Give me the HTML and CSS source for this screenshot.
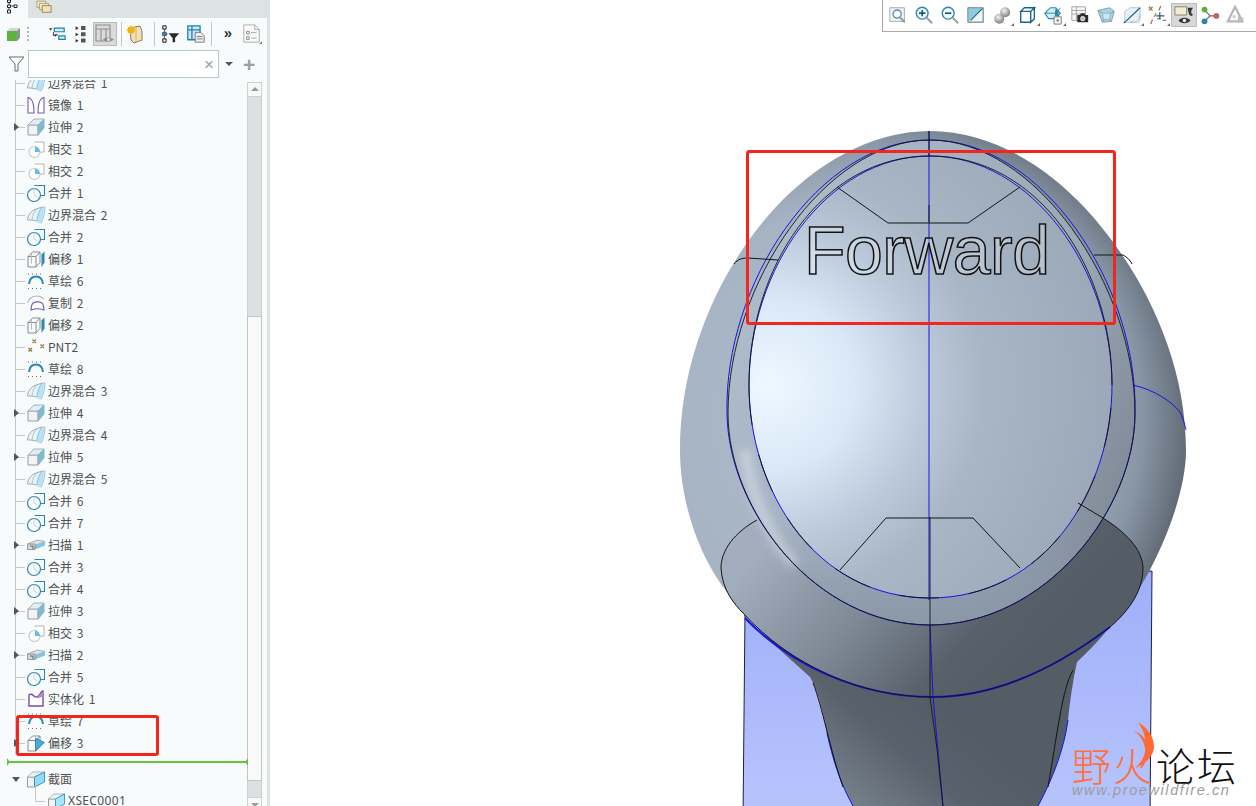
FILE: index.html
```html
<!DOCTYPE html>
<html lang="zh">
<head>
<meta charset="utf-8">
<title>Model tree</title>
<link rel="stylesheet" href="styles.css">
</head>
<body>
<svg class="defs" width="0" height="0" aria-hidden="true">
  <defs>
    <symbol id="i-extrude" viewBox="0 0 20 20"><path d="M2 8h10v10H2z" fill="#f3f3f3" stroke="#9a9a9a"/><path d="M2 8l6-6h10l-6 6z" fill="#dfeef3" stroke="#9fb4bc"/><path d="M12 8l6-6v9l-6 7z" fill="#7fb9d2" stroke="#8fb4c4"/></symbol>
    <symbol id="i-intersect" viewBox="0 0 20 20"><circle cx="8.500" cy="13" r="5.500" fill="#fff" stroke="#c9c9c9" stroke-width="1.200"/><path d="M8.500 3H18v10H14" fill="#fff" stroke="#b4b4b4"/><path d="M9 7.500a5.500 5.500 0 0 1 5 5.500H9z" fill="#58c0ea"/></symbol>
    <symbol id="i-merge" viewBox="0 0 20 20"><path d="M8.500 2.500H18.500V12.500H14" fill="none" stroke="#2e86ad" stroke-width="1.100"/><circle cx="8" cy="12" r="6.500" fill="#fbfdfd" stroke="#2e86ad" stroke-width="1.200"/><path d="M8 5.500V12l5 3" fill="none" stroke="#bcd6e2"/></symbol>
    <symbol id="i-boundary" viewBox="0 0 20 20"><path d="M1.500 15C2 10 5 6 8 5c3-1.500 7-3 11-3-.5 5-1.500 12-4 16-3-2-9-3.500-13.500-3z" fill="#e9f4f9" stroke="#a2a9ac"/><path d="M10 17c0-5 2-9 4.500-13.500L19 2c-.5 5-1.500 12-4 16z" fill="#b8e4f7"/><path d="M6 15C6.500 10 8 7 11 4M11 16C11.500 11 13 7 15 3" fill="none" stroke="#94b8c8" stroke-width=".8"/></symbol>
    <symbol id="i-mirror" viewBox="0 0 20 20"><path d="M2 18V2.500C6 3 8 8 8 18zM18 18V2.500C14 3 12 8 12 18z" fill="#fff" stroke="#7a58a8" stroke-width="1.100"/></symbol>
    <symbol id="i-offset" viewBox="0 0 20 20"><path d="M2 7.500h8V18H2zM2 7.500L6.500 3h7.500L10 7.500M10 18l4-4.500V3" fill="none" stroke="#8a8a8a"/><path d="M5.500 3.500v11" stroke="#b8b8b8"/><path d="M15.500 5.500l3-3v11l-3 4.500z" fill="#2f88b0"/></symbol>
    <symbol id="i-offset3" viewBox="0 0 20 20"><path d="M2 7.500h8V18H2zM2 7.500L6.500 3h7.500L10 7.500M10 18l4-4.500V3" fill="none" stroke="#8a8a8a"/><path d="M9.500 5l9 4.500-9 8z" fill="#46aede" stroke="#1f6d92" stroke-width=".7"/></symbol>
    <symbol id="i-sketch" viewBox="0 0 20 20"><path d="M3 13C3.500 8 6.500 5.500 10 5.500s6.500 2.500 7 7.500" fill="none" stroke="#2b8ab5" stroke-width="2"/><path d="M2 17.500h16M2 3h16" stroke="#6d6d6d" stroke-width="1" stroke-dasharray="1 3"/></symbol>
    <symbol id="i-copy" viewBox="0 0 20 20"><path d="M2 10c0-4 4-7 9-7 3 0 5 1 7 3" fill="none" stroke="#b4b4b4" stroke-width="1.100"/><path d="M5 17c.2-3 1-6 2-7 3-1.500 6-1.500 9 0 1 1 1.800 4 2 7-4-1.500-9-1.500-13 0z" fill="#fff" stroke="#7e57a8" stroke-width="1.100"/></symbol>
    <symbol id="i-pnt" viewBox="0 0 20 20"><path d="M6.500 2.500l3.500 3.500M10 2.500L6.500 6M14.500 7.500l3.500 3.500M18 7.500L14.500 11M2.500 11l3.500 3.500M6 11l-3.500 3.500" fill="none" stroke="#9a7d3c" stroke-width="1.300"/></symbol>
    <symbol id="i-solid" viewBox="0 0 20 20"><path d="M3 6c3-3 5 3 8 2s3-5 6-6v15H3z" fill="#fff" stroke="#7b4ea2" stroke-width="1.400"/><path d="M10 8.500c2 0 4-3 7-6v5c-3 1-5 2-7 1z" fill="#a98cc4"/></symbol>
    <symbol id="i-sweep" viewBox="0 0 20 20"><path d="M1.500 9l10-4 7.500 1.500-10 4z" fill="#dfe3e5" stroke="#98a0a4" stroke-width=".8"/><path d="M9 10.500l10-4v4l-10 4z" fill="#84c6de"/><path d="M1.500 9H9v5.500H1.500z" fill="#d7dadb" stroke="#7d8488" stroke-width=".8"/><path d="M4 11h3v3" fill="none" stroke="#5c6468" stroke-width="1"/></symbol>
    <symbol id="i-section" viewBox="0 0 20 20"><path d="M1.500 8h7v10h-7z" fill="#f3f3f3" stroke="#9a9a9a"/><path d="M1.500 8l5-5h12l-10 5z" fill="#eef5f7" stroke="#a8b4b8"/><path d="M8.500 8l10-5v10l-10 5z" fill="#8fdcf7" stroke="#3f97ba"/></symbol>
    <symbol id="i-xsec" viewBox="0 0 20 20"><path d="M1.500 8h7v10h-7z" fill="#f3f3f3" stroke="#9a9a9a"/><path d="M1.500 8l5-5h11l-9 5z" fill="#eef5f7" stroke="#a8b4b8"/><path d="M8.500 8l9-5v10l-9 5z" fill="#a6e6fb" stroke="#4a9cbb"/></symbol>
  </defs>
</svg>

<div class="app">
  <aside class="side">
    <div class="tabs">
      <div class="tab tab-on">
        <svg width="14" height="14" viewBox="0 0 14 14"><path d="M3 3v8M3 6h5" fill="none" stroke="#555"/><path d="M1.500 0h3v2.500h-3zM1.500 5h3v2.500h-3zM1.500 10h3v3h-3zM8 5h3v2.500H8z" fill="#fff" stroke="#222"/></svg>
      </div>
      <div class="tab">
        <svg width="16" height="13" viewBox="0 0 18 14"><path d="M1 1h10v7H1z" fill="#f5eccd" stroke="#a79a6a"/><path d="M4 3.500h10v7H4z" fill="#f5eccd" stroke="#a79a6a"/><path d="M7 6h10v7.500H7z" fill="#f3e3b2" stroke="#8d7f52"/></svg>
      </div>
    </div>

    <div class="tools">
      <span class="tool">
        <svg width="16" height="16" viewBox="0 0 16 16"><path d="M1 5h10v10H1z" fill="#5eb33e"/><path d="M1 5l3-3h10l-3 3z" fill="#d2d5d3"/><path d="M11 5l3-3v10l-3 3z" fill="#8c9290"/></svg>
      </span>
      <span class="grip"></span>
      <span class="tool tool-tree">
        <svg width="18" height="18" viewBox="0 0 20 20"><path d="M7 3.500h11v4H7zM12 12h7v4h-7z" fill="#d7eefa" stroke="#1f7fb0" stroke-width="1.300"/><path d="M6 8v4M8 11h3" stroke="#333" stroke-width="1.100"/><path d="M1 3.500h4L3 6zM6 10.500h4L8 13z" fill="#333"/></svg>
      </span>
      <span class="tool">
        <svg width="18" height="18" viewBox="0 0 20 20"><path d="M10 1h5v4.500h-5zM10 8h5v4.500h-5zM10 15h5v4.500h-5z" fill="#555"/><path d="M4 1.500L7.500 3.500 4 5.500zM4 8.500l3.500 2-3.500 2zM4 15.500l3.500 2-3.500 2z" fill="#333"/></svg>
      </span>
      <span class="tool tool-on">
        <svg width="20" height="20" viewBox="0 0 20 20"><path d="M1 1h14v16H1zM1 5h14M6 5v12M11 5v12" fill="none" stroke="#8d8d8d" stroke-width="1.100"/><path d="M8 15.500c2-2.500 8-2.500 11 0-3 2.500-9 2.500-11 0z" fill="#8d8d8d"/><circle cx="13.500" cy="15.500" r="1.500" fill="#e5e5e5"/></svg>
      </span>
      <span class="sep sep-a"></span>
      <span class="tool tool-b">
        <svg width="20" height="20" viewBox="0 0 20 20"><path d="M5 4l10-2 2 5v9l-8 3-3-3z" fill="#f1dfb6" stroke="#8b7d5a"/><path d="M11 3v15" stroke="#c8b680"/><circle cx="6" cy="6" r="3.500" fill="#f6a018"/><path d="M6 1v10M1 6h10M2.500 2.500l7 7M9.500 2.500l-7 7" stroke="#f2c200" stroke-width=".8"/></svg>
      </span>
      <span class="sep sep-c"></span>
      <span class="tool tool-d">
        <svg width="18" height="18" viewBox="0 0 22 22"><path d="M3 2v18M3 11h4" stroke="#555" fill="none"/><path d="M1 1h4v4H1zM1 9h4v4H1zM1 17h4v4H1z" fill="#fff" stroke="#111" stroke-width="1.200"/><path d="M1 9h4v4H1z" fill="#2f8ec0"/><path d="M8 10h13l-5 6v5h-3v-5z" fill="#2a2a2a"/></svg>
      </span>
      <span class="tool tool-e">
        <svg width="18" height="18" viewBox="0 0 22 22"><path d="M1 1h15v17H1zM1 6h15M6 1v17" fill="#cfeaf6" stroke="#1f7fb0" stroke-width="1.600"/><path d="M10 9h7l4 4v8H10z" fill="#eef0f0" stroke="#666"/><path d="M12 14h7M12 17h7" stroke="#666"/></svg>
      </span>
      <span class="sep sep-f"></span>
      <span class="tool tool-g more">»</span>
      <span class="tool tool-h">
        <svg width="20" height="20" viewBox="0 0 22 22"><path d="M2 1h12l5 5v14H2z" fill="#fafafa" stroke="#a8a8a8"/><path d="M14 1v5h5" fill="none" stroke="#a8a8a8"/><path d="M5 8h3v3H5zM5 14h3v3H5z" fill="none" stroke="#8a8a8a"/><path d="M10 9.500h6M10 15.500h6" stroke="#a0a0a0"/><path d="M22 19v3h-3z" fill="#777"/></svg>
      </span>
    </div>

    <div class="filter">
      <svg class="funnel" width="17" height="16" viewBox="0 0 17 16"><path d="M1 1h15l-6 7v7H7V8z" fill="#fafafa" stroke="#6a6a6a"/></svg>
      <div class="search"><span class="clear">×</span></div>
      <span class="drop"></span>
      <span class="plus">+</span>
    </div>

    <div class="tree">
      <div class="tree-body">
        <ul class="rows">
          <li class="row"><svg class="ic"><use href="#i-boundary"/></svg><span>边界混合 1</span></li>
          <li class="row"><svg class="ic"><use href="#i-mirror"/></svg><span>镜像 1</span></li>
          <li class="row exp"><svg class="ic"><use href="#i-extrude"/></svg><span>拉伸 2</span></li>
          <li class="row"><svg class="ic"><use href="#i-intersect"/></svg><span>相交 1</span></li>
          <li class="row"><svg class="ic"><use href="#i-intersect"/></svg><span>相交 2</span></li>
          <li class="row"><svg class="ic"><use href="#i-merge"/></svg><span>合并 1</span></li>
          <li class="row"><svg class="ic"><use href="#i-boundary"/></svg><span>边界混合 2</span></li>
          <li class="row"><svg class="ic"><use href="#i-merge"/></svg><span>合并 2</span></li>
          <li class="row"><svg class="ic"><use href="#i-offset"/></svg><span>偏移 1</span></li>
          <li class="row"><svg class="ic"><use href="#i-sketch"/></svg><span>草绘 6</span></li>
          <li class="row"><svg class="ic"><use href="#i-copy"/></svg><span>复制 2</span></li>
          <li class="row"><svg class="ic"><use href="#i-offset"/></svg><span>偏移 2</span></li>
          <li class="row"><svg class="ic"><use href="#i-pnt"/></svg><span>PNT2</span></li>
          <li class="row"><svg class="ic"><use href="#i-sketch"/></svg><span>草绘 8</span></li>
          <li class="row"><svg class="ic"><use href="#i-boundary"/></svg><span>边界混合 3</span></li>
          <li class="row exp"><svg class="ic"><use href="#i-extrude"/></svg><span>拉伸 4</span></li>
          <li class="row"><svg class="ic"><use href="#i-boundary"/></svg><span>边界混合 4</span></li>
          <li class="row exp"><svg class="ic"><use href="#i-extrude"/></svg><span>拉伸 5</span></li>
          <li class="row"><svg class="ic"><use href="#i-boundary"/></svg><span>边界混合 5</span></li>
          <li class="row"><svg class="ic"><use href="#i-merge"/></svg><span>合并 6</span></li>
          <li class="row"><svg class="ic"><use href="#i-merge"/></svg><span>合并 7</span></li>
          <li class="row exp"><svg class="ic"><use href="#i-sweep"/></svg><span>扫描 1</span></li>
          <li class="row"><svg class="ic"><use href="#i-merge"/></svg><span>合并 3</span></li>
          <li class="row"><svg class="ic"><use href="#i-merge"/></svg><span>合并 4</span></li>
          <li class="row exp"><svg class="ic"><use href="#i-extrude"/></svg><span>拉伸 3</span></li>
          <li class="row"><svg class="ic"><use href="#i-intersect"/></svg><span>相交 3</span></li>
          <li class="row exp"><svg class="ic"><use href="#i-sweep"/></svg><span>扫描 2</span></li>
          <li class="row"><svg class="ic"><use href="#i-merge"/></svg><span>合并 5</span></li>
          <li class="row"><svg class="ic"><use href="#i-solid"/></svg><span>实体化 1</span></li>
          <li class="row"><svg class="ic"><use href="#i-sketch"/></svg><span>草绘 7</span></li>
          <li class="row exp"><svg class="ic"><use href="#i-offset3"/></svg><span>偏移 3</span></li>
        </ul>
        <div class="insert"></div>
        <div class="section-head"><span class="down"></span><svg class="ic"><use href="#i-section"/></svg><span>截面</span></div>
        <div class="section-item"><svg class="ic"><use href="#i-xsec"/></svg><span>XSEC0001</span></div>
      </div>
      <div class="scroll">
        <div class="scroll-btn"></div>
        <div class="scroll-track"></div>
        <div class="scroll-thumb"></div>
        <div class="scroll-track scroll-end"></div>
        <div class="scroll-btn scroll-btn-down"></div>
      </div>
    </div>
    <div class="mark"></div>
  </aside>
  <div class="strip"></div>

  <main class="canvas">
    <svg class="model" width="986" height="806" viewBox="270 0 986 806">
      <defs>
        <linearGradient id="g-sheet" gradientUnits="userSpaceOnUse" x1="0" y1="570" x2="0" y2="806"><stop offset="0" stop-color="#a0aefa"/><stop offset="1" stop-color="#b6c4fd"/></linearGradient>
        <linearGradient id="g-neck" gradientUnits="userSpaceOnUse" x1="840" y1="806" x2="930" y2="700"><stop offset="0" stop-color="#79848f"/><stop offset=".6" stop-color="#59616b"/><stop offset="1" stop-color="#545c66"/></linearGradient>
        <radialGradient id="g-egg" gradientUnits="userSpaceOnUse" cx="860" cy="420" r="345"><stop offset="0" stop-color="#b0bccb"/><stop offset=".62" stop-color="#a6b3c3"/><stop offset=".82" stop-color="#8795a5"/><stop offset=".96" stop-color="#5f6872"/><stop offset="1" stop-color="#565e68"/></radialGradient>
        <linearGradient id="g-ring" gradientUnits="userSpaceOnUse" x1="730" y1="330" x2="1135" y2="480"><stop offset="0" stop-color="#aebbca"/><stop offset=".7" stop-color="#9aa7b7"/><stop offset="1" stop-color="#7f8a97"/></linearGradient>
        <radialGradient id="g-inner" gradientUnits="userSpaceOnUse" cx="770" cy="385" r="345"><stop offset="0" stop-color="#ecf9ff"/><stop offset=".25" stop-color="#dae7f7"/><stop offset=".45" stop-color="#bcc9da"/><stop offset=".62" stop-color="#a9b6c6"/><stop offset="1" stop-color="#9ba8b7"/></radialGradient>
        <linearGradient id="g-collar" gradientUnits="userSpaceOnUse" x1="790" y1="520" x2="985" y2="700"><stop offset="0" stop-color="#a2aebd"/><stop offset=".45" stop-color="#7d8895"/><stop offset=".8" stop-color="#58606a"/><stop offset="1" stop-color="#545c66"/></linearGradient>
        <linearGradient id="g-band" gradientUnits="userSpaceOnUse" x1="0" y1="520" x2="0" y2="630"><stop offset="0" stop-color="#8c99a9" stop-opacity="0"/><stop offset="1" stop-color="#8896a6"/></linearGradient>
        <filter id="f-soft" x="-30%" y="-30%" width="160%" height="160%"><feGaussianBlur stdDeviation="5"/></filter>
      </defs>

      <path d="M745 612L743 820H1150L1152 571z" fill="url(#g-sheet)" stroke="#1c2240" stroke-width="1"/>
      <path d="M745 614L780 650L810 677C820 695 823 715 827 733C834 765 842 786 853 806H1038C1052 780 1064 750 1068 720C1070 700 1073 680 1077 662C1095 645 1120 620 1140 580L930 560z" fill="url(#g-neck)"/>
      <path d="M930 131C870 131 815 165 775 208C725 262 680 350 680 450C680 510 705 575 745 612C790 665 860 697 932 697C1000 697 1060 665 1110 627C1140 600 1186 510 1186 450C1186 350 1135 262 1085 208C1045 165 990 131 930 131z" fill="url(#g-egg)"/>
      <path d="M757 520C735 532 721 550 721 568C722 590 735 605 743 613C790 665 860 697 932 697C1000 697 1060 665 1110 627C1130 610 1143 590 1143 568C1142 548 1125 532 1103 518L1078 503L930 560z" fill="url(#g-collar)"/>
      <path d="M930 140C825 140 728 285 728 413C728 510 815 625 930 625C1045 625 1135 510 1135 413C1135 285 1035 140 930 140z" fill="url(#g-ring)"/>
      <path d="M930 140C825 140 728 285 728 413C728 510 815 625 930 625C1045 625 1135 510 1135 413C1135 285 1035 140 930 140z" fill="url(#g-band)"/>
      <path d="M745 450C750 495 768 535 795 565" fill="none" stroke="#eef4fa" stroke-width="10" stroke-opacity=".45" filter="url(#f-soft)"/>
      <path d="M930 156C822 156 749 270 749 385C749 490 815 598 930 598C1045 598 1112 490 1112 385C1112 270 1036 156 930 156z" fill="url(#g-inner)"/>

      <g fill="none" stroke="#1414e6" stroke-width="1">
        <path d="M930 140C818 140 724 285 727 413C728 510 815 625 930 625C1045 625 1135 510 1135 413C1138 285 1042 140 930 140z"/>
        <path d="M930 156C826 156 749 270 749 385C749 490 815 598 930 598C1045 598 1112 490 1112 385C1112 270 1032 156 930 156z"/>
        <path d="M929 131L929 600"/>
        <path d="M930 625L933 697Q938 750 943 806"/>
        <path d="M1133 385C1155 390 1172 402 1180 412C1184 420 1186 430 1186 430"/>
        <path d="M745 618C790 665 860 697 932 697C1000 697 1060 665 1110 627" stroke-width="2"/>
        <path d="M827 733C834 765 842 786 853 806M1068 720C1064 750 1052 780 1038 806"/>
      </g>

      <g fill="none" stroke="#141414" stroke-width=".9">
        <path d="M930 140C825 140 728 285 728 413C728 510 815 625 930 625C1045 625 1135 510 1135 413C1135 285 1035 140 930 140z"/>
        <path d="M930 156C820 156 749 270 749 385M1112 385C1112 270 1040 156 930 156"/>
        <path d="M749 385C749 490 815 598 930 598C1045 598 1112 490 1112 385" stroke-dasharray="40 30"/>
        <path d="M837 187L888 223H968L1020 187" stroke-width="1"/>
        <path d="M840 570L886 518H973L1020 568" stroke-width="1"/>
        <path d="M929 131V156M929 205V222M930 517V697Q938 750 943 806"/>
        <path d="M734 264C738 259 742 258 748 258L778 260M1094 255L1123 255C1127 257 1130 260 1132 264" stroke-width="1"/>
        <path d="M757 520C735 532 721 550 721 568C722 590 735 605 743 613C790 665 860 697 932 697C1000 697 1060 665 1110 627C1130 610 1143 590 1143 568C1142 548 1125 532 1103 518L1078 503" stroke-width="1"/>
        <path d="M813 683C822 705 830 750 843 787M1073 670C1062 690 1058 730 1048 787" stroke-width="1"/>
      </g>

      <g class="word">
        <text class="word-face" x="804" y="274" textLength="246">Forward</text>
      </g>

      <rect x="747.500" y="151.500" width="367" height="172" rx="2" fill="none" stroke="#f5241c" stroke-width="3"/>
    </svg>

    <div class="viewbar">
      <span class="vb"><svg width="20" height="20" viewBox="0 0 22 22"><path d="M2 3h16v15H2z" fill="#f3f5f6" stroke="#a2a2a2"/><circle cx="10" cy="10" r="4.500" fill="#fff" stroke="#4a8aa8" stroke-width="1.400"/><path d="M13.500 14l5 5" stroke="#999" stroke-width="2.200"/></svg></span>
      <span class="vb"><svg width="20" height="20" viewBox="0 0 22 22"><circle cx="9" cy="9" r="6.500" fill="#f3fafd" stroke="#2e86ad" stroke-width="1.500"/><path d="M5.500 9h7M9 5.500v7" stroke="#14597b" stroke-width="1.800"/><path d="M14 14l6 6" stroke="#a3a3a3" stroke-width="2.400"/></svg></span>
      <span class="vb"><svg width="20" height="20" viewBox="0 0 22 22"><circle cx="9" cy="9" r="6.500" fill="#f3fafd" stroke="#2e86ad" stroke-width="1.500"/><path d="M5.500 9h7" stroke="#14597b" stroke-width="1.800"/><path d="M14 14l6 6" stroke="#a3a3a3" stroke-width="2.400"/></svg></span>
      <span class="vb"><svg width="20" height="20" viewBox="0 0 22 22"><path d="M2 3h17v16H2z" fill="#8fcbe4" stroke="#777"/><path d="M3 18C8 16 13 8 18 4v14z" fill="#f3f6f7"/><path d="M5 17L18 4" stroke="#1f5f80" stroke-width="1.200"/></svg></span>
      <span class="vb vb-c"><svg width="20" height="20" viewBox="0 0 22 22"><defs><radialGradient id="g-ball" cx=".4" cy=".35" r=".7"><stop offset="0" stop-color="#f4f4f4"/><stop offset="1" stop-color="#777"/></radialGradient></defs><circle cx="8" cy="15" r="5.500" fill="url(#g-ball)"/><circle cx="14.500" cy="8" r="5.500" fill="url(#g-ball)"/></svg></span>
      <span class="vb vb-c"><svg width="20" height="20" viewBox="0 0 22 22"><path d="M3 7h11v12H3zM3 7l4-4h11l-4 4zM14 7l4-4v12l-4 4z" fill="#fff" stroke="#17648a" stroke-width="1.500"/></svg></span>
      <span class="vb vb-c"><svg width="20" height="20" viewBox="0 0 22 22"><path d="M1 9l6-6h6l5 6-5 6H5z" fill="#d0edf9" stroke="#2e86ad" stroke-width="1.200"/><path d="M1 9h12l5-6" fill="none" stroke="#2e86ad"/><path d="M13 3l3 5v4h-4V8z" fill="#2e86ad"/><path d="M11 13h8v8h-8z" fill="#f4f4f4" stroke="#777"/><path d="M14 16h2v2h-2z" fill="#555"/></svg></span>
      <span class="vb"><svg width="20" height="20" viewBox="0 0 22 22"><path d="M2 2h15v15H2zM2 6h15M2 10h15M7 2v15" fill="#f8f8f8" stroke="#a0a0a0"/><path d="M8 11h3l1-2h4l1 2h3v8H8z" fill="#2c2c2c"/><circle cx="14" cy="15" r="2.500" fill="#bfbfbf" stroke="#fff" stroke-width=".7"/></svg></span>
      <span class="vb"><svg width="20" height="20" viewBox="0 0 22 22"><path d="M2 6l13-3 5 4-3 11-10 1z" fill="#a9d4e5" stroke="#7f9ba8"/><path d="M7 9h9l-1 7H8z" fill="#c9e6f1" stroke="#8fb2c2"/><path d="M2 6l5 3M20 7l-4 2M7 19l1-3M17 18l-2-2" stroke="#7f9ba8"/></svg></span>
      <span class="vb vb-c"><svg width="20" height="20" viewBox="0 0 22 22"><path d="M3 19L3 7 9 3h11v12l-6 4z" fill="#e6f2f7" stroke="#a8c8d6"/><path d="M2 20L20 3" stroke="#1c5f80" stroke-width="1.300"/><path d="M10 19h9V10" stroke="#888" stroke-dasharray="1 1.500" fill="none"/></svg></span>
      <span class="vb vb-c"><svg width="20" height="20" viewBox="0 0 22 22"><path d="M1 2l4 4M5 2L1 6M14 1l-2 5M5 16l-2 5M10 15l4 0M16 17l4 0" stroke="#9a7d3c" stroke-width="1.400" fill="none"/><path d="M13 8v8M9 12h9" stroke="#1f5f80" stroke-width="1.300"/><path d="M9 9l-2 4" stroke="#9a7d3c" stroke-width="1.400"/></svg></span>
      <span class="vb vb-on"><svg width="20" height="20" viewBox="0 0 22 22"><path d="M1 2h13v9H1z" fill="#f5eccd" stroke="#7d7d7d"/><path d="M15 3h6l-2 3v3l2 2-2 1-2-1-1-3z" fill="#333"/><path d="M5 17c3-4 10-4 13 0-3 4-10 4-13 0z" fill="#333"/><circle cx="11.500" cy="17" r="2" fill="#e8e8e8"/></svg></span>
      <span class="vb"><svg width="20" height="20" viewBox="0 0 22 22"><path d="M5 5l6 7-6 6M11 12h8" fill="none" stroke="#666" stroke-width="1.300"/><circle cx="5" cy="5" r="3.200" fill="#5cae3d"/><circle cx="5" cy="18" r="3.200" fill="#2c83ad"/><circle cx="18" cy="12" r="3.200" fill="#c9605e"/></svg></span>
      <span class="vb"><svg width="20" height="20" viewBox="0 0 22 22"><path d="M10 2L2 18h16z" fill="none" stroke="#b5b5b5" stroke-width="2.400"/><path d="M13 11l7 4-7 5z" fill="#bdbdbd"/><circle cx="9" cy="13" r="2" fill="#cfcfcf"/></svg></span>
    </div>

    <div class="logo">
      <svg class="flame" width="24" height="48" viewBox="0 0 24 48"><path d="M6 0C16 6 22 15 22 25C22 33 15 41 3 46C12 38 14 30 13 26C12 19 8 13 2 9C8 11 11 14 13 18C13 12 10 6 6 0z" fill="#ff6a32"/></svg>
      <div class="logo-cn"><span class="logo-fire">野火</span><span class="logo-forum">论坛</span></div>
      <div class="logo-url">www.proewildfire.cn</div>
    </div>
  </main>
</div>
</body>
</html>
```

FILE: styles.css
```css
* { box-sizing: border-box; }
html, body { margin: 0; padding: 0; height: 100%; overflow: hidden; background: #fff; }
body { font-family: "Noto Sans CJK SC", "Noto Sans", sans-serif; font-size: 12px; color: #505050; }
.defs { position: absolute; }
.app { display: flex; width: 1256px; height: 806px; }

.side { position: relative; width: 267px; height: 806px; background: #f7fbfc; display: flex; flex-direction: column; flex: none; }
.strip { width: 3px; background: #dce2e2; flex: none; }

.tabs { display: flex; height: 18px; background: #dde2e2; overflow: hidden; flex: none; }
.tab { width: 28px; height: 18px; display: flex; align-items: flex-start; padding: 0 0 0 8px; }
.tab svg { display: block; }
.tab-on { background: #f7fbfc; padding-left: 6px; }

.tools { display: flex; align-items: center; height: 24px; margin-top: 4px; padding-left: 2px; flex: none; }
.tool { width: 24px; height: 24px; display: flex; align-items: center; justify-content: center; flex: none; }
.grip { width: 4px; height: 14px; border-left: 2px dotted #b4b4b4; margin-left: 1px; flex: none; }
.tool-tree { margin-left: 14px; }
.tool-on { background: #dadada; border: 1px solid #bcbcbc; }
.sep { width: 1px; height: 24px; background: #c2c8c8; flex: none; }
.sep-a { margin-left: 4px; }
.tool-b { margin-left: 1px; }
.sep-c { margin-left: 7px; }
.tool-d { margin-left: 4px; }
.tool-e { margin-left: 1px; }
.sep-f { margin-left: 3px; }
.tool-g { margin-left: 4px; }
.more { font-family: "Liberation Sans", sans-serif; font-size: 15px; font-weight: 700; color: #333; padding-bottom: 4px; }

.filter { display: flex; align-items: center; height: 28px; margin-top: 4px; padding-left: 8px; flex: none; }
.search { width: 191px; height: 28px; margin-left: 3px; border: 1px solid #b7caca; background: #fff; display: flex; align-items: center; justify-content: flex-end; padding-right: 4px; }
.clear { font-family: "Liberation Sans", sans-serif; font-size: 17px; line-height: 1; color: #9a9a9a; }
.drop { width: 0; height: 0; margin-left: 6px; border-left: 4px solid transparent; border-right: 4px solid transparent; border-top: 4px solid #555; }
.plus { margin-left: 10px; font-family: "Liberation Sans", sans-serif; font-size: 21px; font-weight: 700; line-height: 1; color: #9a9f9f; }

.tree { display: flex; height: 726px; margin-top: 2px; overflow: hidden; flex: none; }
.tree-body { width: 247px; padding-left: 15px; margin-top: -8px; flex: none; }
.rows { list-style: none; margin: 0; padding: 0; border-left: 1px solid #c6c6c6; }
.row { position: relative; display: flex; align-items: center; height: 22px; gap: 2px; padding-left: 10px; white-space: nowrap; word-spacing: 2px; }
.row span, .section-head span, .section-item span { padding-bottom: 2px; }
.row::before { content: ""; position: absolute; left: 0; top: 11px; width: 9px; height: 1px; background: #c6c6c6; }
.row.exp::after { content: ""; position: absolute; left: -2px; top: 7px; border-top: 4px solid transparent; border-bottom: 4px solid transparent; border-left: 5px solid #555; }
.ic { width: 20px; height: 20px; flex: none; display: block; }

.insert { position: relative; height: 2px; margin: 7px 0 5px -8px; width: 241px; background: #66c23f; }
.insert::before, .insert::after { content: ""; position: absolute; top: -3px; border-top: 4px solid transparent; border-bottom: 4px solid transparent; }
.insert::before { left: 0; border-left: 3px solid #66c23f; }
.insert::after { right: 0; border-right: 3px solid #66c23f; }
.section-head { position: relative; display: flex; align-items: center; height: 22px; gap: 2px; padding-left: 11px; }
.section-head .down { position: absolute; left: -3px; top: 9px; padding: 0; border-left: 4px solid transparent; border-right: 4px solid transparent; border-top: 5px solid #555; }
.section-item { position: relative; display: flex; align-items: center; height: 22px; gap: 1px; padding-left: 32px; font-family: "Noto Sans", sans-serif; letter-spacing: .35px; }
.section-item::before { content: ""; position: absolute; left: 20px; top: -4px; width: 1px; height: 15px; background: #c6c6c6; }
.section-item::after { content: ""; position: absolute; left: 20px; top: 11px; width: 10px; height: 1px; background: #c6c6c6; }

.scroll { width: 15px; height: 726px; margin-top: 2px; display: flex; flex-direction: column; flex: none; }
.scroll-btn { position: relative; height: 15px; background: #f8f8f8; border: 1px solid #d0d0d0; flex: none; }
.scroll-btn::after { content: ""; position: absolute; left: 3px; top: 4px; border-left: 4px solid transparent; border-right: 4px solid transparent; border-bottom: 4px solid #9a9a9a; }
.scroll-btn-down::after { top: 5px; border-bottom: 0; border-top: 4px solid #9a9a9a; }
.scroll-track { height: 219px; background: #dedfe1; border-left: 1px solid #d0d0d0; border-right: 1px solid #d0d0d0; flex: none; }
.scroll-thumb { height: 465px; background: #f9f9f9; border: 1px solid #c4c4c4; flex: none; }
.scroll-end { height: 16px; }

.mark { position: absolute; left: 16px; top: 715px; width: 143px; height: 41px; border: 3px solid #f5241c; border-radius: 3px; }

.canvas { position: relative; flex: 1; height: 806px; overflow: hidden; background: #fff; }
.model { display: block; }
.word text { font-family: "Liberation Sans", sans-serif; font-size: 68px; }
.word-face { fill: rgba(255,255,255,.25); stroke: #121212; stroke-width: 1.500; }

.viewbar { position: absolute; top: 0; right: 0; width: 374px; height: 32px; display: flex; align-items: center; padding: 0 0 1px 2px; background: #fff; border-left: 1px solid #a8a8a8; border-bottom: 1px solid #a8a8a8; }
.vb { position: relative; width: 26px; height: 24px; display: flex; align-items: center; justify-content: center; flex: none; }
.vb-c::after { content: ""; position: absolute; right: 1px; bottom: 1px; border-left: 3px solid transparent; border-bottom: 3px solid #666; }
.vb-on { background: #d8d8d8; box-shadow: inset 0 0 0 1px #bdbdbd; }

.logo { position: absolute; left: 802px; top: 722px; width: 180px; height: 80px; }
.flame { position: absolute; left: 60px; top: 0; }
.logo-cn { position: absolute; left: 0; top: 23px; display: flex; font-size: 39px; line-height: 38px; white-space: nowrap; font-weight: 300; }
.logo-fire { color: #ff7040; width: 84px; letter-spacing: 2px; }
.logo-forum { color: #111; letter-spacing: 2px; }
.logo-url { position: absolute; left: 0; top: 61px; font-family: "Liberation Sans", sans-serif; font-style: italic; font-size: 14.500px; line-height: 14px; letter-spacing: 1.600px; color: #9c9c9c; white-space: nowrap; }
```
